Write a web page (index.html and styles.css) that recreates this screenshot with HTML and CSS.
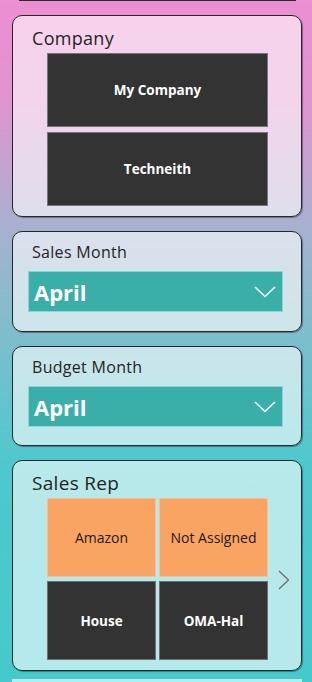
FILE: index.html
```html
<!DOCTYPE html>
<html lang="en">
<head>
<meta charset="utf-8">
<title>Slicers</title>
<link rel="stylesheet" href="styles.css">
</head>
<body>
<div class="page">
  <div class="stub"></div>

  <section class="card card-company">
    <h2 class="title title-company">Company</h2>
    <div class="btn-list">
      <div class="btn">My Company</div>
      <div class="btn">Techneith</div>
    </div>
  </section>

  <section class="card card-month">
    <h2 class="title title-month">Sales Month</h2>
    <div class="dropdown">
      <span class="dropdown-value">April</span>
      <svg class="chev-down" width="22" height="12" viewBox="0 0 22 12"><path d="M1 1 L11 10.5 L21 1" fill="none" stroke="#fff" stroke-width="1.6"/></svg>
    </div>
  </section>

  <section class="card card-month card-month-last">
    <h2 class="title title-month">Budget Month</h2>
    <div class="dropdown">
      <span class="dropdown-value">April</span>
      <svg class="chev-down" width="22" height="12" viewBox="0 0 22 12"><path d="M1 1 L11 10.5 L21 1" fill="none" stroke="#fff" stroke-width="1.6"/></svg>
    </div>
  </section>

  <section class="card card-rep">
    <h2 class="title title-rep">Sales Rep</h2>
    <div class="rep-row">
      <div class="tiles">
        <div class="tile tile-sel">Amazon</div>
        <div class="tile tile-sel">Not Assigned</div>
        <div class="tile">House</div>
        <div class="tile">OMA-Hal</div>
      </div>
      <svg class="chev-right" width="12" height="20" viewBox="0 0 12 20"><path d="M1 1 L10.5 10 L1 19" fill="none" stroke="#6b6b6b" stroke-width="1.2"/></svg>
    </div>
  </section>

  <div class="strip"></div>
</div>
</body>
</html>
```
FILE: styles.css
```css
html, body {
  margin: 0;
  padding: 0;
}
body {
  width: 312px;
  height: 682px;
  overflow: hidden;
  font-family: "Open Sans", "Liberation Sans", sans-serif;
  background: linear-gradient(to bottom,
    #ec8fd3 0%,
    #e193cf 14%,
    #b8a9d0 28%,
    #a6b1cf 34%,
    #86bccc 46%,
    #62c4cd 60%,
    #4ec8cd 68%,
    #46c9cc 100%);
}
.page {
  display: flex;
  flex-direction: column;
  padding: 0 10px 0 12px;
}
.stub {
  height: 1px;
  margin: 0 6px 0 7px;
  background: #2a2a2a;
}
.card {
  margin-top: 14px;
  border: 1px solid #262626;
  border-radius: 10px;
  background: rgba(255, 255, 255, 0.6);
  box-shadow: 1px 1px 1px rgba(0, 0, 0, 0.35);
  display: flex;
  flex-direction: column;
}
.title {
  margin: 0 0 0 19px;
  font-weight: 400;
  color: #252423;
  letter-spacing: 0.3px;
}
.title-company {
  font-size: 18px;
  line-height: 24px;
}
.title-month {
  font-size: 16px;
  line-height: 22px;
}
.title-rep {
  font-size: 19px;
  line-height: 24px;
}

/* Company */
.card-company {
  padding: 10px 0 10px 0;
}
.btn-list {
  margin: 3px 0 0 34px;
  width: 221px;
  display: flex;
  flex-direction: column;
  gap: 5px;
}
.btn {
  height: 72px;
  border: 1px solid #767676;
  background: #333333;
  color: #ffffff;
  font-weight: 700;
  font-size: 13.5px;
  display: flex;
  align-items: center;
  justify-content: center;
}

/* Month dropdowns */
.card-month {
  padding: 9px 0 19px 0;
}
.card-month-last {
  padding-bottom: 18px;
}
.dropdown {
  margin: 8px 0 0 15px;
  height: 39px;
  width: 242px;
  box-sizing: content-box;
  border: 1px solid rgba(255, 255, 255, 0.45);
  background: #3aafa9;
  display: flex;
  align-items: center;
  justify-content: space-between;
  padding: 0 6px 0 5px;
}
.dropdown-value {
  color: #ffffff;
  font-weight: 700;
  font-size: 22px;
  line-height: 30px;
}
.chev-down {
  display: block;
}

/* Sales rep */
.card-rep {
  padding: 10px 0 10px 0;
}
.rep-row {
  margin: 3px 0 0 34px;
  display: flex;
  align-items: center;
}
.tiles {
  width: 221px;
  display: grid;
  grid-template-columns: 109px 109px;
  grid-template-rows: 79px 79px;
  column-gap: 3px;
  row-gap: 4px;
}
.tile {
  box-sizing: border-box;
  border: 1px solid rgba(255, 255, 255, 0.3);
  background: #333333;
  color: #ffffff;
  font-weight: 700;
  font-size: 13.5px;
  display: flex;
  align-items: center;
  justify-content: center;
}
.tile-sel {
  background: #f9a462;
  color: #1a1a1a;
  font-weight: 500;
  font-size: 14px;
}
.chev-right {
  display: block;
  margin: 2px 0 0 10px;
}

.strip {
  margin-top: 8px;
  height: 6px;
  background: #b9e9ea;
}
```
